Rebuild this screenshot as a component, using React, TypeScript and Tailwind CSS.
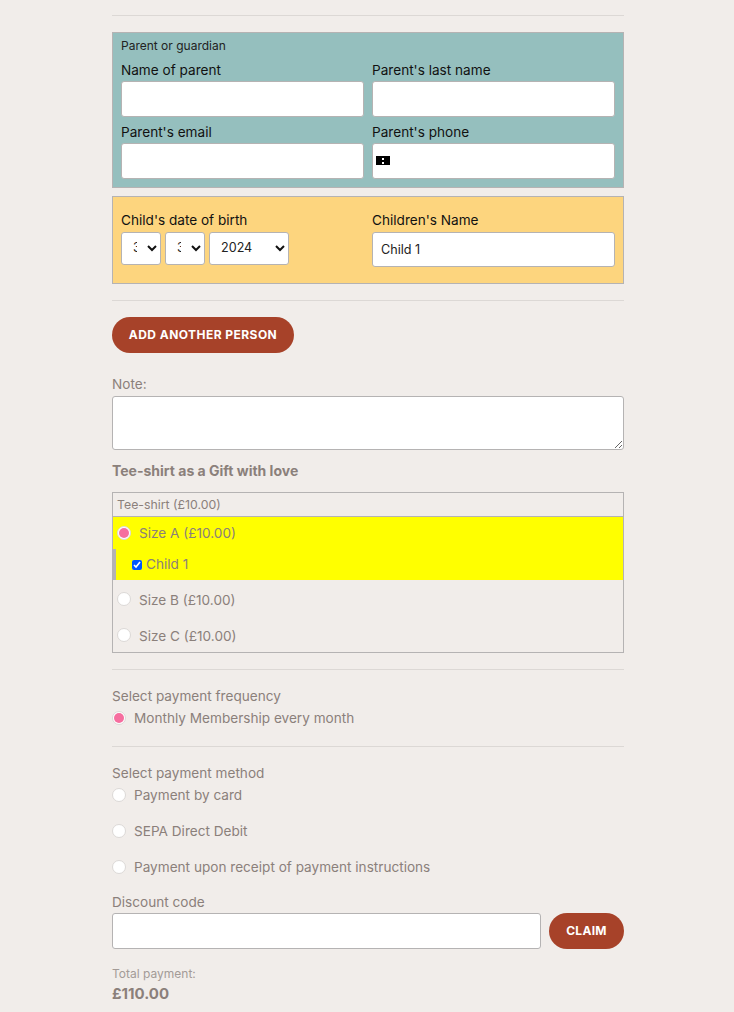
import type { ReactNode } from "react";

const inputClass = "block w-full rounded-[3px] border border-[#b5b3b3] bg-white text-[12.6px] text-[#222] outline-none";

const Field = ({ label, children }: { label: string; children: ReactNode }) => (
    <div className="min-w-0">
        <label className="block h-[22px] text-[13.6px] leading-[23px] text-[#111]">{label}</label>
        {children}
    </div>
);

const Radio = ({ checked }: { checked?: boolean }) => (
    <span className="flex h-[14px] w-[14px] shrink-0 items-center justify-center rounded-full border border-[#dcd9d7] bg-white">
        {checked && <span className="h-[10px] w-[10px] rounded-full bg-[#f66e9f]" />}
    </span>
);

const DateSelect = ({ value, className }: { value: string; className: string }) => (
    <div className="relative h-[33px]">
        <select
            defaultValue={value}
            className={`h-full appearance-none overflow-hidden rounded-[3px] border border-[#b5b3b3] bg-white pl-[11px] text-[12.6px] text-[#222] outline-none ${className}`}
        >
            <option>{value}</option>
        </select>
        <svg className="pointer-events-none absolute top-[12px] right-[4px] h-[8px] w-[10px]" viewBox="0 0 10 8" fill="none">
            <path d="M1 2l4 4 4-4" stroke="#111" strokeWidth="2" />
        </svg>
    </div>
);

const PaymentOption = ({ label, checked }: { label: string; checked?: boolean }) => (
    <div className="flex h-[22px] items-center gap-[8px] text-[13.6px] text-[#8b807b]">
        <Radio checked={checked} />
        <span>{label}</span>
    </div>
);

const SizeOption = ({ label }: { label: string }) => (
    <div className="flex h-[36px] items-center gap-[8px] pl-[4px] text-[13.6px] text-[#8b807b]">
        <Radio />
        <span className="mt-[2px]">{label}</span>
    </div>
);

const Divider = () => <hr className="border-t border-[#dcd8d5]" />;

export default function App() {
    return (
        <div className="h-[1012px] overflow-hidden bg-[#f1edea] font-['Inter',sans-serif]">
            <div className="ml-[112px] w-[512px] pt-[15px]">
                <Divider />

                <section className="mt-[16px] h-[156px] border border-[#b5b3b3] bg-[#95bfbe] px-[8px] pt-[4px]">
                    <p className="h-[17px] text-[12px] leading-[17px] text-[#222]">Parent or guardian</p>
                    <div className="mt-[5px] grid grid-cols-[243px_243px] gap-x-[8px] gap-y-[4px]">
                        <Field label="Name of parent">
                            <input className={`${inputClass} h-[36px]`} />
                        </Field>
                        <Field label="Parent's last name">
                            <input className={`${inputClass} h-[36px]`} />
                        </Field>
                        <Field label="Parent's email">
                            <input className={`${inputClass} h-[36px]`} />
                        </Field>
                        <Field label="Parent's phone">
                            <div className="relative">
                                <input className={`${inputClass} h-[36px]`} />
                                <svg className="absolute top-[13px] left-[4px] h-[9px] w-[14px]" viewBox="0 0 14 9">
                                    <rect width="14" height="9" fill="#000" />
                                    <rect x="6" y="2" width="2" height="2" fill="#fff" />
                                    <rect x="6" y="6" width="2" height="2" fill="#fff" />
                                </svg>
                            </div>
                        </Field>
                    </div>
                </section>

                <section className="mt-[8px] h-[88px] border border-[#b5b3b3] bg-[#fdd57e] px-[8px] pt-[12px]">
                    <div className="grid grid-cols-[243px_243px] gap-x-[8px]">
                        <Field label="Child's date of birth">
                            <div className="mt-[1px] flex gap-[4px]">
                                <DateSelect value="3" className="w-[40px] pr-[23px]" />
                                <DateSelect value="3" className="w-[40px] pr-[23px]" />
                                <DateSelect value="2024" className="w-[80px] pr-[19px]" />
                            </div>
                        </Field>
                        <Field label="Children's Name">
                            <input className={`${inputClass} mt-[1px] h-[35px] px-[8px]`} defaultValue="Child 1" />
                        </Field>
                    </div>
                </section>

                <div className="mt-[16px]">
                    <Divider />
                </div>

                <button className="mt-[16px] block h-[36px] w-[182px] rounded-full bg-[#a74229] text-[12px] font-bold tracking-[0.45px] text-white">
                    ADD ANOTHER PERSON
                </button>

                <label className="mt-[20px] block h-[21px] text-[13.6px] leading-[23px] text-[#8b807b]">Note:</label>
                <textarea className="mt-[2px] block h-[54px] w-full rounded-[3px] border border-[#b5b3b3] bg-white outline-none" />

                <h3 className="mt-[10px] h-[21px] text-[14px] leading-[21px] font-bold text-[#8b807b]">Tee-shirt as a Gift with love</h3>

                <div className="mt-[11px] h-[161px] border border-[#b5b3b3]">
                    <div className="flex h-[24px] items-center border-b border-[#b5b3b3] pt-[2px] pl-[4px] text-[12.3px] text-[#8b807b]">Tee-shirt (£10.00)</div>
                    <div className="bg-[#ffff00]">
                        <div className="flex h-[32px] items-center gap-[8px] pl-[4px] text-[13.6px] text-[#8b807b]">
                            <Radio checked />
                            <span>Size A (£10.00)</span>
                        </div>
                        <div className="flex h-[31px] items-center gap-[4px] border-l-[3px] border-[#b5b3b3] pl-[16px] text-[13.6px] text-[#8b807b]">
                            <input type="checkbox" defaultChecked className="m-0 h-[10px] w-[10px] accent-[#0057ff]" />
                            <span>Child 1</span>
                        </div>
                    </div>
                    <div className="pt-[1px]">
                        <SizeOption label="Size B (£10.00)" />
                        <SizeOption label="Size C (£10.00)" />
                    </div>
                </div>

                <div className="mt-[16px]">
                    <Divider />
                </div>

                <p className="mt-[16px] h-[21px] text-[13.6px] leading-[21px] text-[#8b807b]">Select payment frequency</p>
                <PaymentOption label="Monthly Membership every month" checked />

                <div className="mt-[17px]">
                    <Divider />
                </div>

                <p className="mt-[16px] h-[21px] text-[13.6px] leading-[21px] text-[#8b807b]">Select payment method</p>
                <div className="flex flex-col gap-[14px]">
                    <PaymentOption label="Payment by card" />
                    <PaymentOption label="SEPA Direct Debit" />
                    <PaymentOption label="Payment upon receipt of payment instructions" />
                </div>

                <label className="mt-[14px] block h-[21px] text-[13.6px] leading-[21px] text-[#8b807b]">Discount code</label>
                <div className="flex gap-[8px]">
                    <input className={`${inputClass} h-[36px] flex-1`} />
                    <button className="h-[36px] w-[75px] rounded-full bg-[#a74229] text-[12px] font-bold tracking-[0.3px] text-white">CLAIM</button>
                </div>

                <p className="mt-[16px] h-[18px] text-[12px] leading-[18px] text-[#a39b97]">Total payment:</p>
                <p className="text-[15px] leading-[22px] font-bold text-[#8b807b]">£110.00</p>
            </div>
        </div>
    );
}
